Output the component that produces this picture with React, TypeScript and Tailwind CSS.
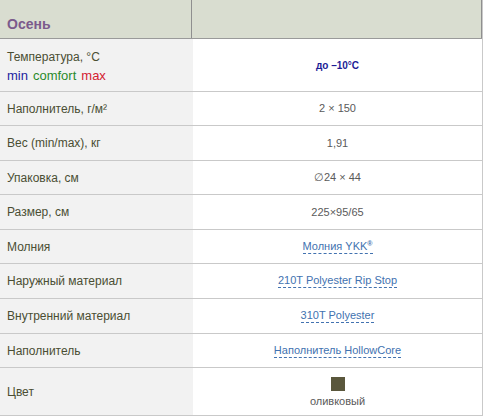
function Link({ children }: { children: React.ReactNode }) {
  return (
    <span className="text-[#4272b0] border-b border-dashed border-[#4272b0] leading-[13px]">{children}</span>
  );
}

const data = [
  { label: "Наполнитель, г/м²", value: <span>2 × 150</span>, h: "h-[34px]" },
  { label: "Вес (min/max), кг", value: <span>1,91</span>, h: "h-[35px]" },
  { label: "Упаковка, см", value: <span>∅24 × 44</span>, h: "h-[34px]" },
  { label: "Размер, см", value: <span>225×95/65</span>, h: "h-[35px]" },
  {
    label: "Молния",
    value: (
      <Link>
        Молния YKK<sup className="text-[7px] font-bold">®</sup>
      </Link>
    ),
    h: "h-[34px]",
  },
  { label: "Наружный материал", value: <Link>210T Polyester Rip Stop</Link>, h: "h-[35px]" },
  { label: "Внутренний материал", value: <Link>310T Polyester</Link>, h: "h-[35px]" },
  { label: "Наполнитель", value: <Link>Наполнитель HollowCore</Link>, h: "h-[34px]" },
];

export default function App() {
  return (
    <div className="w-[486px] h-[419px] bg-white font-['Liberation_Sans',Arial,sans-serif] text-[12px]">
      <div className="w-[483px] border-r border-[#c9c9c9]">
        <div className="flex h-[39px] bg-[#d9ddd0] border-b border-[#9a9a9a]">
          <div className="w-[192px] flex items-center pl-[7px] pt-[11px] text-[14px] font-bold text-[#7b5a8c] border-r border-[#8f8f8f]">
            Осень
          </div>
          <div className="flex-1 border-r border-[#8f8f8f]" />
        </div>

        <div className="flex h-[53px] border-b border-[#c9c9c9]">
          <div className="w-[193px] bg-[#f2f2f2] pl-[7px] pt-[10px] text-[#4a4e33]">
            <div className="leading-[16px]">Температура, °C</div>
            <div className="leading-[16px] mt-[3px] flex gap-[5px] text-[13px]">
              <span className="text-[#2222a0]">min</span>
              <span className="text-[#2a8a2a]">comfort</span>
              <span className="text-[#d42030]">max</span>
            </div>
          </div>
          <div className="flex-1 flex items-center justify-center text-[10px] font-bold text-[#1c1c96]">до –10°C</div>
        </div>

        {data.map((r, i) => (
          <div key={i} className={`flex ${r.h} border-b border-[#c9c9c9]`}>
            <div className="w-[193px] bg-[#f2f2f2] pl-[7px] flex items-center text-[#4a4e33]">{r.label}</div>
            <div className="flex-1 flex items-center justify-center text-[11px] text-[#5a5a5a]">{r.value}</div>
          </div>
        ))}

        <div className="flex h-[48px] border-b border-[#c9c9c9]">
          <div className="w-[193px] bg-[#f2f2f2] pl-[7px] flex items-center text-[#4a4e33]">Цвет</div>
          <div className="flex-1 flex flex-col items-center justify-center text-[11px] text-[#5a5a5a]">
            <div className="w-[14px] h-[14px] bg-[#5a573c] mt-[2px]" />
            <div className="mt-[4px] leading-[13px]">оливковый</div>
          </div>
        </div>
      </div>
    </div>
  );
}
